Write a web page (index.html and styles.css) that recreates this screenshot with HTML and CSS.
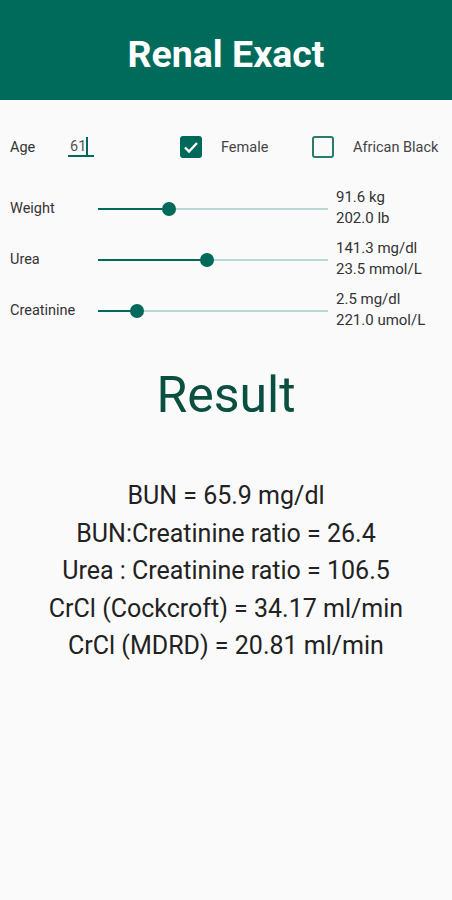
FILE: index.html
```html
<!DOCTYPE html>
<html>
    <head>
        <meta charset="UTF-8" />
        <meta name="viewport" content="width=device-width, initial-scale=1.0"/>
        <link rel="stylesheet" href="styles.css">
    </head>
    <body>
        <div class="appbar">
            <h1>Renal Exact</h1>
        </div>
        <div class="inputs">
            <div class="toprow">
                <span class="label agelabel">Age</span>
                <span class="agefield">61<span class="caret"></span></span>
                <span class="check on">
                    <svg viewBox="0 0 22 22" width="22" height="22"><path d="M5 11.5l4 4 8-8.5" fill="none" stroke="#fff" stroke-width="2.4"/></svg>
                </span>
                <span class="checklabel female">Female</span>
                <span class="check off"></span>
                <span class="checklabel">African Black</span>
            </div>
            <div class="sliders">
                <div class="sliderrow">
                    <span class="label">Weight</span>
                    <div class="track"><div class="fill" style="width: 71px"></div><div class="thumb" style="left: 71px"></div></div>
                    <div class="values"><span>91.6 kg</span><span>202.0 lb</span></div>
                </div>
                <div class="sliderrow">
                    <span class="label">Urea</span>
                    <div class="track"><div class="fill" style="width: 109px"></div><div class="thumb" style="left: 109px"></div></div>
                    <div class="values"><span>141.3 mg/dl</span><span>23.5 mmol/L</span></div>
                </div>
                <div class="sliderrow">
                    <span class="label">Creatinine</span>
                    <div class="track"><div class="fill" style="width: 39px"></div><div class="thumb" style="left: 39px"></div></div>
                    <div class="values"><span>2.5 mg/dl</span><span>221.0 umol/L</span></div>
                </div>
            </div>
        </div>
        <h2 class="result">Result</h2>
        <div class="lines">
            <p>BUN = 65.9 mg/dl</p>
            <p>BUN:Creatinine ratio = 26.4</p>
            <p>Urea : Creatinine ratio = 106.5</p>
            <p>CrCl (Cockcroft) = 34.17 ml/min</p>
            <p>CrCl (MDRD) = 20.81 ml/min</p>
        </div>
    </body>
</html>
```

FILE: styles.css
```css
body {
    margin: 0;
    background-color: #fafafa;
    font-family: Roboto, "Noto Sans", sans-serif;
    color: #222;
}
.appbar {
    background-color: #006b5a;
    height: 100px;
    display: flex;
    align-items: center;
    justify-content: center;
}
.appbar h1 {
    margin: 0;
    color: #fff;
    font-size: 37.5px;
    font-weight: bold;
    padding-top: 8px;
}
.inputs {
    padding: 0 0 0 10px;
}
.toprow {
    display: flex;
    align-items: center;
    height: 22px;
    margin-top: 36px;
    font-size: 14.5px;
}
.label {
    font-size: 14.5px;
    color: #333;
    width: 88px;
}
.agelabel {
    width: 58px;
}
.agefield {
    display: inline-block;
    width: 24px;
    padding-left: 2px;
    border-bottom: 2px solid #00695a;
    height: 16px;
    line-height: 16px;
    margin-top: 2px;
    color: #555;
    margin-right: 86px;
    position: relative;
}
.caret {
    position: absolute;
    left: 18px;
    top: -2px;
    width: 2px;
    height: 18px;
    background-color: #00695a;
}
.check {
    width: 22px;
    height: 22px;
    border-radius: 3px;
    box-sizing: border-box;
    display: inline-block;
}
.check.on {
    background-color: #00695a;
}
.check.off {
    border: 2px solid #2c7a6c;
}
.checklabel {
    color: #444;
    margin-left: 19px;
}
.female {
    width: 91px;
}
.sliders {
    display: flex;
    flex-direction: column;
    gap: 7px;
    margin-top: 28px;
}
.sliderrow {
    display: flex;
    align-items: center;
    height: 44px;
}
.track {
    position: relative;
    width: 230px;
    height: 2px;
    background-color: #b9d8d1;
    margin-top: 2px;
}
.fill {
    height: 2px;
    background-color: #00695a;
}
.thumb {
    position: absolute;
    top: -6px;
    margin-left: -7px;
    width: 14px;
    height: 14px;
    border-radius: 50%;
    background-color: #00695a;
}
.values {
    display: flex;
    flex-direction: column;
    margin-left: 8px;
    font-size: 15px;
    line-height: 21px;
    color: #333;
}
.result {
    text-align: center;
    font-size: 50px;
    font-weight: normal;
    color: #0b4f40;
    margin: 34px 0 0 0;
}
.lines {
    text-align: center;
    margin-top: 53px;
    font-size: 25px;
    color: #222;
}
.lines p {
    margin: 0;
    line-height: 37.5px;
}
```
